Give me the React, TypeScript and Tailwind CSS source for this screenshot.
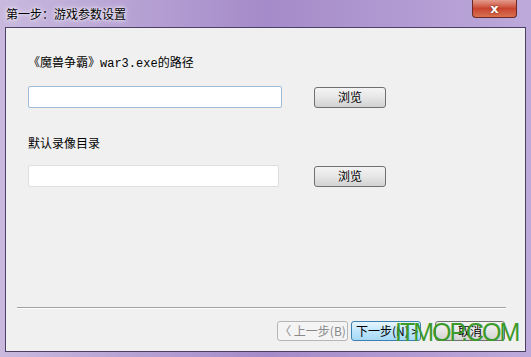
export default function App() {
  const font = { fontFamily: '"Noto Sans CJK SC", "Liberation Sans", sans-serif' };

  return (
    <div
      className="relative w-[531px] h-[357px] overflow-hidden flex flex-col bg-gradient-to-r from-[#c9b9de] via-[#a58bc9] to-[#bda9da] text-[12px] text-black"
      style={font}
    >
      {/* 标题栏 */}
      <div className="h-[27px] flex items-center pl-[6px] shrink-0">
        <span className="leading-none [text-shadow:0_0_6px_#ffffff,0_0_3px_#ffffff]">第一步：游戏参数设置</span>
      </div>
      <div className="absolute top-0 right-[14px] w-[45px] h-[18px] rounded-b-[4px] border border-t-0 border-[#6b2a25] bg-gradient-to-b from-[#e49a8c] via-[#c8442f] to-[#d8704f] flex items-center justify-center">
        <span className="text-white font-bold text-[13px] leading-none [text-shadow:0_0_2px_#5a1a10]" style={{ fontFamily: '"DejaVu Sans", sans-serif' }}>
          x
        </span>
      </div>

      {/* 内容区域 */}
      <div className="mx-[5px] mb-[5px] flex-1 border border-[#4e3f66] bg-[#f0f0f0] flex flex-col">
        <div className="pl-[22px] pt-[27px] flex flex-col">
          <div className="h-[13px] leading-[13px]">
            《魔兽争霸》<span style={{ fontFamily: '"Liberation Mono", monospace' }}>war3.exe</span>的路径
          </div>
          <div className="mt-[18px] flex items-center gap-[32px]">
            <div className="w-[254px] h-[22px] bg-white border border-[#9dbbd6] rounded-[2px]" />
            <button className="w-[72px] h-[21px] border border-[#707070] rounded-[3px] bg-gradient-to-b from-[#f4f4f4] via-[#e6e6e6] to-[#d2d2d2] leading-none">
              浏览
            </button>
          </div>
          <div className="mt-[28px] h-[13px] leading-[13px]">默认录像目录</div>
          <div className="mt-[16px] flex items-center gap-[35px]">
            <div className="w-[251px] h-[22px] bg-white border border-[#dedede] rounded-[2px]" />
            <button className="w-[72px] h-[21px] border border-[#707070] rounded-[3px] bg-gradient-to-b from-[#f4f4f4] via-[#e6e6e6] to-[#d2d2d2] leading-none">
              浏览
            </button>
          </div>
        </div>

        <div className="mt-auto ml-[11px] mr-[19px] border-t border-[#a0a0a0] border-b border-b-white" />
        <div className="flex justify-end items-center mt-[12px] mb-[10px] mr-[20px]">
          <button className="w-[71px] h-[20px] border border-[#b5b5b5] rounded-[3px] bg-[#f4f4f4] text-[#8a8a8a] leading-none">
            〈 上一步(B)
          </button>
          <button className="ml-[3px] w-[70px] h-[20px] border border-[#3c7fb1] rounded-[3px] bg-gradient-to-b from-[#e8f6fd] via-[#bee6fd] to-[#a7d9f5] leading-none text-left pl-[4px]">
            下一步(N) &gt;
          </button>
          <button className="ml-[14px] w-[70px] h-[20px] border border-[#707070] rounded-[3px] bg-gradient-to-b from-[#f4f4f4] via-[#e6e6e6] to-[#d2d2d2] leading-none">
            取消
          </button>
        </div>
      </div>

      {/* 水印 */}
      <div
        className="absolute left-[395px] top-[320px] text-[25px] leading-none text-[#3c9a2a] tracking-[-2px]"
        style={{ fontFamily: '"Liberation Sans", Arial, sans-serif' }}
      >
        ITMOP.COM
      </div>
    </div>
  );
}
